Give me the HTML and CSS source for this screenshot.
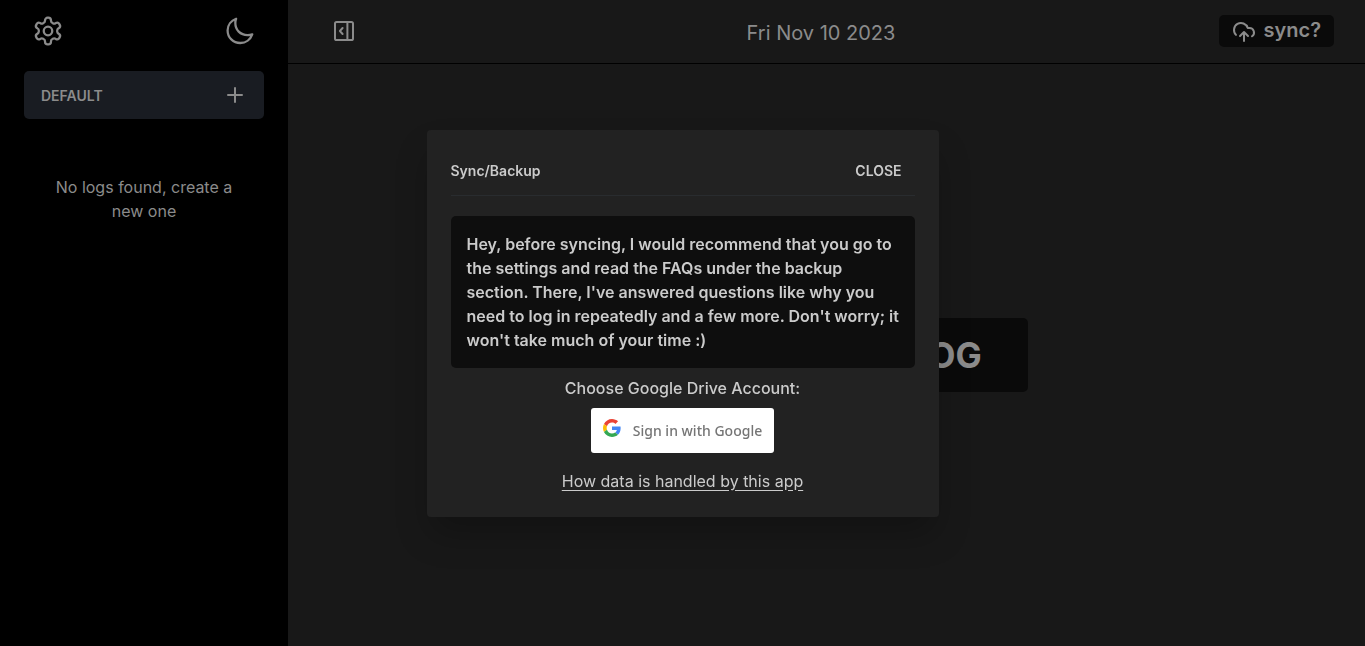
FILE: index.html
```html
<!DOCTYPE html>
<html lang="en">
<head>
<meta charset="utf-8">
<meta name="viewport" content="width=device-width, initial-scale=1">
<title>Logs</title>
<link rel="stylesheet" href="styles.css">
</head>
<body>
<div class="app">
  <aside class="sidebar">
    <div class="tools">
      <button class="icon-button" aria-label="Settings">
        <svg class="icon-large" viewBox="0 0 24 24"><path d="M12.22 2h-.44a2 2 0 0 0-2 2v.18a2 2 0 0 1-1 1.73l-.43.25a2 2 0 0 1-2 0l-.15-.08a2 2 0 0 0-2.73.73l-.22.38a2 2 0 0 0 .73 2.73l.15.1a2 2 0 0 1 1 1.72v.51a2 2 0 0 1-1 1.74l-.15.09a2 2 0 0 0-.73 2.73l.22.38a2 2 0 0 0 2.73.73l.15-.08a2 2 0 0 1 2 0l.43.25a2 2 0 0 1 1 1.73V20a2 2 0 0 0 2 2h.44a2 2 0 0 0 2-2v-.18a2 2 0 0 1 1-1.73l.43-.25a2 2 0 0 1 2 0l.15.08a2 2 0 0 0 2.73-.73l.22-.39a2 2 0 0 0-.73-2.73l-.15-.08a2 2 0 0 1-1-1.74v-.5a2 2 0 0 1 1-1.74l.15-.09a2 2 0 0 0 .73-2.73l-.22-.38a2 2 0 0 0-2.73-.73l-.15.08a2 2 0 0 1-2 0l-.43-.25a2 2 0 0 1-1-1.73V4a2 2 0 0 0-2-2z"/><circle cx="12" cy="12" r="3.2"/></svg>
      </button>
      <button class="icon-button" aria-label="Dark mode">
        <svg class="icon-large" viewBox="0 0 24 24"><path d="M21.2 14.5A9.72 9.72 0 0 1 17.6 15.1c-5.385 0-9.1-3.9-9.1-9.1 0-1.1.2-2.2.6-3.2A9.6 9.6 0 0 0 2.7 11.55C2.7 16.9 6.9 21 12.2 21a9.6 9.6 0 0 0 9-6.5Z"/></svg>
      </button>
    </div>
    <button class="group">
      <span>DEFAULT</span>
      <svg class="icon-plus" viewBox="0 0 24 24"><path d="M12 5v14M5 12h14"/></svg>
    </button>
    <p class="empty">No logs found, create a new one</p>
  </aside>
  <main class="content">
    <header class="topbar">
      <button class="panel-button" aria-label="Collapse sidebar">
        <svg class="icon-panel" viewBox="0 0 24 24"><rect x="3" y="3" width="18" height="18" rx="1.6"/><path d="M15.4 3v18M10.6 9 7.9 12l2.7 3"/></svg>
      </button>
      <time class="date" datetime="2023-11-10">Fri Nov 10 2023</time>
      <button class="sync">
        <svg class="icon-cloud" viewBox="0 0 24 24"><path d="M4 14.9A7 7 0 1 1 15.71 8h1.79a4.5 4.5 0 0 1 2.5 8.24M12 12v9M8 16l4-4 4 4"/></svg>
        <span class="sync-label">sync?</span>
      </button>
    </header>
    <section class="workspace">
      <button class="create">CREATE NEW LOG</button>
    </section>
  </main>
</div>
<div class="overlay">
  <div class="modal" role="dialog" aria-labelledby="modal-title">
    <div class="modal-head">
      <h2 class="modal-title" id="modal-title">Sync/Backup</h2>
      <button class="close">CLOSE</button>
    </div>
    <p class="notice">Hey, before syncing, I would recommend that you go to the settings and read the FAQs under the backup section. There, I've answered questions like why you need to log in repeatedly and a few more. Don't worry; it won't take much of your time :)</p>
    <p class="choose">Choose Google Drive Account:</p>
    <button class="google">
      <svg class="google-logo" viewBox="0 0 48 48"><path fill="#ea4335" d="M24 9.5c3.54 0 6.71 1.22 9.21 3.6l6.85-6.85C35.9 2.38 30.47 0 24 0 14.62 0 6.51 5.38 2.56 13.22l7.98 6.19C12.43 13.72 17.74 9.5 24 9.5z"/><path fill="#4285f4" d="M46.98 24.55c0-1.57-.15-3.09-.38-4.55H24v9.02h12.94c-.58 2.96-2.26 5.48-4.78 7.18l7.73 6c4.51-4.18 7.09-10.36 7.09-17.65z"/><path fill="#fbbc05" d="M10.53 28.59A14.5 14.5 0 0 1 9.77 24c0-1.6.27-3.14.76-4.59l-7.98-6.19A23.9 23.9 0 0 0 0 24c0 3.88.92 7.54 2.56 10.78l7.97-6.19z"/><path fill="#34a853" d="M24 48c6.48 0 11.93-2.13 15.89-5.81l-7.73-6c-2.15 1.45-4.92 2.3-8.16 2.3-6.26 0-11.57-4.22-13.47-9.91l-7.98 6.19C6.51 42.62 14.62 48 24 48z"/></svg>
      <span>Sign in with Google</span>
    </button>
    <a class="policy" href="#data">How data is handled by this app</a>
  </div>
</div>
</body>
</html>
```
FILE: styles.css
```css
* {
  box-sizing: border-box;
}

body {
  margin: 0;
  background: #181818;
  color: #8b8b8b;
  font-family: Inter, sans-serif;
  font-size: 16px;
  line-height: 24px;
}

button {
  margin: 0;
  padding: 0;
  border: 0;
  background: none;
  color: inherit;
  font: inherit;
  cursor: pointer;
}

p,
h2 {
  margin: 0;
}

svg {
  display: block;
  fill: none;
  stroke: currentColor;
  stroke-width: 2;
  stroke-linecap: round;
  stroke-linejoin: round;
}

.app {
  display: flex;
  min-height: 100vh;
}

.sidebar {
  flex: 0 0 288px;
  display: flex;
  flex-direction: column;
  padding: 15px 24px;
  background: #000;
}

.tools {
  display: flex;
  justify-content: space-between;
  padding: 0 8px;
}

.icon-large {
  width: 32px;
  height: 32px;
  stroke-width: 1.7;
}

.group {
  display: flex;
  align-items: center;
  justify-content: space-between;
  height: 48px;
  margin-top: 24px;
  padding: 0 17px;
  border-radius: 5px;
  background: #191c22;
  font-size: 14px;
  font-weight: 600;
  line-height: 25px;
}

.icon-plus {
  width: 24px;
  height: 24px;
}

.empty {
  padding: 56px 24px 0;
  text-align: center;
}

.content {
  flex: 1;
  display: flex;
  flex-direction: column;
}

.topbar {
  display: grid;
  grid-template-columns: 1fr auto 1fr;
  align-items: center;
  height: 64px;
  padding: 0 31px 2px 20px;
  border-bottom: 1px solid #000;
}

.panel-button {
  justify-self: start;
  padding: 0 24px;
}

.icon-panel {
  width: 24px;
  height: 24px;
}

.date {
  padding-top: 4px;
  font-size: 20px;
}

.sync {
  justify-self: end;
  display: flex;
  align-items: center;
  gap: 7px;
  height: 32px;
  padding: 0 13px;
  border-radius: 5px;
  background: #0a0a0a;
  font-size: 20px;
  font-weight: 600;
}

.sync-label {
  padding-bottom: 2px;
}

.icon-cloud {
  width: 24px;
  height: 24px;
  margin-top: 2px;
}

.workspace {
  flex: 1;
  display: flex;
  align-items: center;
  justify-content: center;
}

.create {
  padding: 16px 46px;
  border-radius: 5px;
  background: #0a0a0a;
  font-size: 35px;
  font-weight: 700;
  line-height: 42px;
}

.overlay {
  position: fixed;
  inset: 0;
  display: flex;
  align-items: center;
  justify-content: center;
}

.modal {
  display: flex;
  flex-direction: column;
  align-items: center;
  width: 100%;
  max-width: 512px;
  padding: 24px;
  border-radius: 4px;
  background: #222;
  box-shadow: 0 20px 32px -4px rgba(0, 0, 0, 0.25);
  color: #cbcbcb;
}

.modal-head {
  align-self: stretch;
  display: flex;
  align-items: center;
  justify-content: space-between;
  padding-bottom: 7px;
  border-bottom: 1px solid #292c2f;
  font-size: 14px;
  font-weight: 600;
}

.modal-title {
  font-size: 14px;
  font-weight: 600;
}

.close {
  height: 34px;
  padding: 0 13px;
}

.notice {
  margin-top: 20px;
  padding: 16px 12px 16px 16px;
  border-radius: 5px;
  background: #0e0e0e;
  font-weight: 600;
}

.choose {
  margin-top: 8px;
  font-weight: 500;
}

.google {
  display: flex;
  align-items: center;
  gap: 12px;
  margin-top: 8px;
  padding: 11px 12px 10px;
  border-radius: 3px;
  background: #fff;
  color: #757575;
  font-family: "Noto Sans", sans-serif;
  font-size: 14px;
  font-weight: 500;
}

.google-logo {
  width: 18px;
  height: 18px;
  margin-bottom: 6px;
  stroke: none;
}

.policy {
  margin-top: 16px;
  color: inherit;
  text-underline-offset: 3px;
}
```
